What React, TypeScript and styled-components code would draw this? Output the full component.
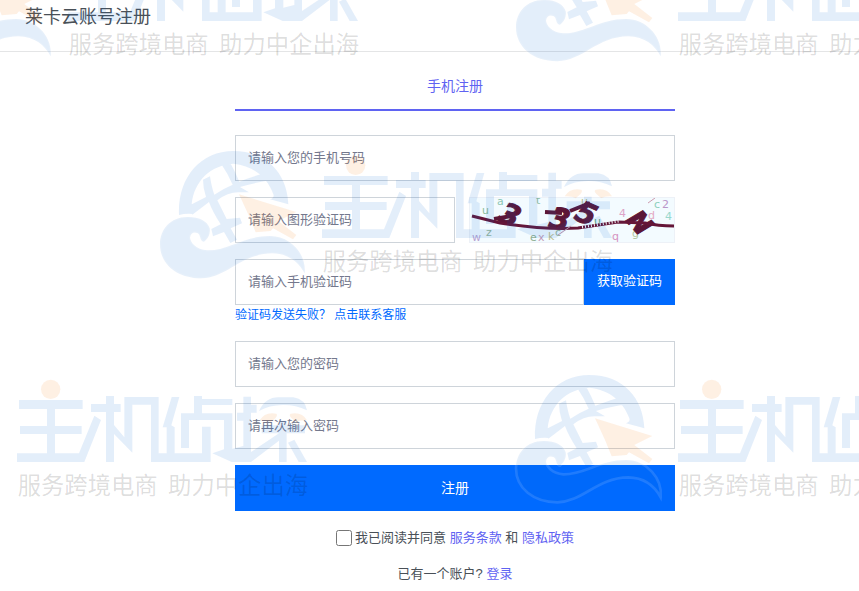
import React from "react";
import styled, { createGlobalStyle } from "styled-components";

const GlobalStyle = createGlobalStyle`
  *, *::before, *::after { box-sizing: border-box; }
  html, body, #root { height: 100%; }
  body {
    margin: 0;
    background: #fff;
    color: #495057;
    font-family: "Liberation Sans", "Noto Sans CJK SC", sans-serif;
    font-size: 13px;
    line-height: 20px;
  }
  button, input { font: inherit; }
`;

const Page = styled.div`
  position: relative;
  min-height: 100%;
  overflow: hidden;
`;

const Header = styled.header`
  height: 52px;
  padding: 4px 25px;
  border-bottom: 1px solid #e4e5e6;
`;

const Title = styled.h1`
  margin: 0;
  color: #495057;
  font-size: 18px;
  font-weight: 400;
  line-height: 26px;
`;

const Main = styled.main`
  padding: 24px 0 8px 51px;
`;

const Form = styled.form`
  display: flex;
  flex-direction: column;
  gap: 16px;
  width: 100%;
  max-width: 440px;
  margin: 0 auto;
`;

const Tabs = styled.nav`
  display: flex;
  margin-bottom: 8px;
`;

const Tab = styled.button`
  flex: 1;
  padding: 0 0 13px;
  border: 0;
  border-bottom: 2px solid #5f63f2;
  background: none;
  color: #5f63f2;
  font-size: 14px;
  line-height: 20px;
`;

const Row = styled.div<{ $gap?: number }>`
  display: flex;
  gap: ${({ $gap = 0 }) => $gap}px;
`;

const Field = styled.input`
  flex: 1 1 0;
  min-width: 0;
  height: 46px;
  padding: 0 12px 2px;
  border: 1px solid #ced4da;
  border-radius: 0;
  background: #fff;
  color: #495057;
  &::placeholder { color: #74788d; opacity: 1; }
`;

const Captcha = styled.svg`
  flex: none;
  width: 206px;
  height: 46px;
  border: 1px solid #edf1f7;
  background: #f3fbff;
`;

const PrimaryButton = styled.button<{ $large?: boolean }>`
  height: 46px;
  padding: ${({ $large }) => ($large ? "0 13px" : "0 13px 2px")};
  border: 0;
  background: #006aff;
  color: #fff;
  font-size: ${({ $large }) => ($large ? 14 : 13)}px;
`;

const Hint = styled.a`
  display: block;
  color: #006aff;
  font-size: 12px;
  line-height: 20px;
  text-decoration: none;
`;

const Terms = styled.div`
  display: flex;
  justify-content: center;
  align-items: center;
  gap: 3px;
  padding-top: 1px;
`;

const Check = styled.input`
  width: 16px;
  height: 16px;
  margin: 0;
`;

const Link = styled.a`
  color: #5f63f2;
  text-decoration: none;
`;

const SignIn = styled.p`
  margin: 0;
  text-align: center;
`;

const WatermarkLayer = styled.svg`
  position: absolute;
  inset: 0;
  width: 100%;
  height: 100%;
  pointer-events: none;
`;

const Emblem = styled.g`
  fill: rgba(0, 100, 210, 0.11);
`;

const Wave = styled.path`
  stroke: rgba(255, 255, 255, 0.12);
  stroke-width: 8px;
`;

const Slogan = styled.text`
  font-family: "Noto Sans CJK SC", sans-serif;
  font-size: 70px;
  white-space: pre;
  fill: rgba(0, 0, 0, 0.14);
`;

const accent = "rgba(246, 119, 0, 0.11)";
const marks = [[-95, -66], [515, -66], [159, 151], [-146, 375], [515, 375]];

function Watermark() {
  return (
    <WatermarkLayer aria-hidden="true">
      <defs>
        <g id="brand-mark">
          <g transform="scale(.333333)">
            <Emblem transform="translate(-45 -30)">
              <path d="M105 222C100 112 168 30 268 30C370 30 430 100 433 190L378 175Q392 170 388 160C370 110 330 75 268 68C200 72 150 120 143 190Q152 205 145 219Q125 217 105 222ZM177 116L198 106Q203 140 211 161Q237 143 266 131Q252 99 234 73L259 66Q273 91 286 122Q328 105 375 93L385 117Q326 126 288 138L315 154L286 154Q252 153 220 178L248 234L288 230L294 247L260 262L279 296L259 306L240 273L207 286L202 264L230 250Q205 211 195 183L145 221L139 192L186 168Q177 142 177 116Z" />
              <Wave d="M180 302C190 295 200 280 197 262C190 238 160 227 130 228C80 228 48 265 48 310C48 370 100 412 172 412C250 410 290 338 385 337C435 338 465 365 482 397C488 340 440 285 378 285C300 285 250 330 190 328C155 325 140 305 138 290C140 275 150 272 160 276C172 280 165 300 180 302Z" />
              <path fill={accent} d="M285 160L457 213L403 240L457 282L447 295L387 262L380 270L335 274L315 225Z" />
            </Emblem>
            <Emblem transform="translate(438 -15)">
              <circle cx="152" cy="58" r="29" fill={accent} />
              <path d="M57 90H248V117H165V168H245V192H165V250H237L283 137L303 150L253 276H51V250H141V192H60V168H141V117H57Z" />
              <path d="M273 102H318V78H342V102H362V126H342V165L373 202V81H476V250H500V172H488L515 81H538L514 166L524 172V250H606V170H632V276H453V104H397V248L342 192V276H318V126H273Z" />
              <path d="M543 130H582V78H606V87H697V105H606V130H697V236L730 228V152H711V128H730V80H753V104H770V128H753V246L837 190H785V166H837V152H860V166H915V190H860V276H837V212L753 276H695L637 250L672 238V150H567V234H543Z" />
              <path d="M864 218L883 209L921 276H896Z" />
              <path d="M777 123Q796 82 835 82H880Q916 88 921 121Q888 105 850 105Q807 105 777 123Z" />
              <path fill={accent} d="M779 151Q795 124 829 131Q834 134 826 145L812 157Q802 150 779 151ZM921 151Q906 124 872 131Q865 134 875 145L889 157Q899 150 921 151Z" />
            </Emblem>
            <Slogan x="491" y="358">服务跨境电商  助力中企出海</Slogan>
          </g>
        </g>
      </defs>
      {marks.map(([x, y]) => <use key={`${x}:${y}`} href="#brand-mark" x={x} y={y} />)}
    </WatermarkLayer>
  );
}

const noise: [string, number, number, string][] = [
  ["a", 27, 7, "#8cc6b2"], ["u", 12, 16, "#8dbd98"], ["t", 66, 6, "#8bbba5"],
  ["w", 2, 43, "#b9a3d2"], ["z", 16, 38, "#99b69b"], ["e", 60, 43, "#8eaf91"],
  ["x", 68, 43, "#c39cb9"], ["k", 78, 42, "#bdbd8e"], ["q", 142, 42, "#d695c1"],
  ["4", 149, 19, "#dda3c8"], ["d", 178, 21, "#e4aac3"], ["4", 195, 22, "#99d8cd"],
  ["c", 184, 10, "#8dcfbc"], ["2", 192, 10, "#bb96c9"], ["g", 162, 39, "#b1c69c"],
  ["u", 124, 27, "#62a979"], ["c", 85, 38, "#9cb79b"], ["u", 111, 7, "#b5bd85"],
];

function CaptchaImage() {
  return (
    <Captcha viewBox="0 0 204 44" role="img" aria-label="图形验证码">
      <g fontFamily="DejaVu Sans" fontSize="11">
        {noise.map(([char, x, y, color]) => <text key={`${x}:${y}`} x={x} y={y} fill={color}>{char}</text>)}
      </g>
      <g
        fontFamily="DejaVu Sans"
        fontSize="29"
        fontWeight="700"
        fontStyle="italic"
        fill="#5c1637"
        stroke="#5c1637"
        strokeWidth="1"
      >
        <text x="30" y="27" transform="rotate(24 40 17)">3</text>
        <text x="80" y="31" transform="rotate(12 90 20)">3</text>
        <text x="106" y="26" transform="rotate(24 117 16)">5</text>
        <text x="159" y="34" fontSize="27" transform="rotate(48 170 24)">N</text>
      </g>
      <path d="M24 21L42 18M75 14L92 15M100 13L120 5" stroke="#5c1637" strokeWidth="4" />
      <path d="M2 18L30 25Q75 32 108 30L148 24L175 25Q188 28 204 28" fill="none" stroke="#651638" strokeWidth="3" />
      <path d="M112 29L149 23" fill="none" stroke="#f3fbff" strokeWidth="3" strokeDasharray="1 2" />
      <path d="M88 37L101 28M178 5L185 0" stroke="#cc9aad" strokeWidth="1" />
    </Captcha>
  );
}

export default function App() {
  return (
    <Page>
      <GlobalStyle />
      <Header><Title>莱卡云账号注册</Title></Header>
      <Main>
        <Form onSubmit={(event) => event.preventDefault()}>
          <Tabs><Tab type="button">手机注册</Tab></Tabs>
          <Row><Field type="tel" aria-label="手机号码" placeholder="请输入您的手机号码" /></Row>
          <Row $gap={14}>
            <Field aria-label="图形验证码" placeholder="请输入图形验证码" />
            <CaptchaImage />
          </Row>
          <div>
            <Row>
              <Field aria-label="手机验证码" placeholder="请输入手机验证码" />
              <PrimaryButton type="button">获取验证码</PrimaryButton>
            </Row>
            <Hint href="#support">验证码发送失败？ 点击联系客服</Hint>
          </div>
          <Row><Field type="password" aria-label="密码" placeholder="请输入您的密码" /></Row>
          <Row><Field type="password" aria-label="确认密码" placeholder="请再次输入密码" /></Row>
          <PrimaryButton $large type="submit">注册</PrimaryButton>
          <Terms>
            <Check id="agree" type="checkbox" />
            <label htmlFor="agree">我已阅读并同意 <Link href="#terms">服务条款</Link> 和 <Link href="#privacy">隐私政策</Link></label>
          </Terms>
          <SignIn>已有一个账户? <Link href="#login">登录</Link></SignIn>
        </Form>
      </Main>
      <Watermark />
    </Page>
  );
}
